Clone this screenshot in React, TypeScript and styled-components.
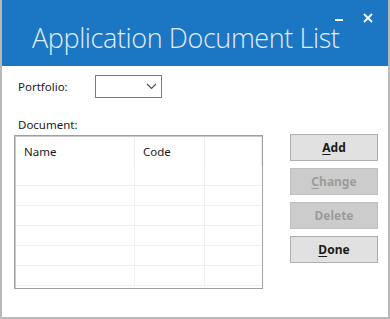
import { Fragment } from 'react';
import styled, { createGlobalStyle } from 'styled-components';

const GlobalStyle = createGlobalStyle`
  html, body {
    margin: 0;
    padding: 0;
    background: #ffffff;
  }
  body {
    font-family: "Noto Sans", "Liberation Sans", sans-serif;
  }
`;

const Window = styled.div`
  box-sizing: border-box;
  width: 390px;
  height: 319px;
  display: flex;
  flex-direction: column;
  background: #ffffff;
  border: 2px solid #b9b9b9;
  border-top: none;
  overflow: hidden;
`;

const TitleBar = styled.header`
  position: relative;
  height: 66px;
  margin: 0 -2px;
  background: #1b76c4;
  display: flex;
  align-items: flex-end;
  padding: 0 0 13px 32px;
  box-sizing: border-box;
`;

const Title = styled.h1`
  margin: 0;
  font-family: "Open Sans", "Noto Sans", sans-serif;
  font-weight: 300;
  font-size: 27px;
  line-height: 30px;
  color: #e3ecf7;
  letter-spacing: -0.4px;
`;

const WindowButton = styled.span<{ $right: number; $top: number }>`
  position: absolute;
  right: ${(p) => p.$right}px;
  top: ${(p) => p.$top}px;
  display: flex;
`;

const Body = styled.div`
  flex: 1;
  display: flex;
  flex-direction: column;
  padding: 9px 0 0 12px;
`;

const FieldRow = styled.div`
  display: flex;
  align-items: center;
  padding-left: 4px;
`;

const Label = styled.label`
  font-size: 11.5px;
  color: #1a1a1a;
  width: 77px;
`;

const Combo = styled.div`
  box-sizing: border-box;
  width: 67px;
  height: 23px;
  border: 1px solid #7a7a7a;
  background: #ffffff;
  display: flex;
  align-items: center;
  justify-content: flex-end;
  padding-right: 4px;
`;

const DocLabel = styled(Label)`
  display: block;
  margin: 19px 0 0 4px;
  line-height: 16px;
`;

const Main = styled.div`
  display: flex;
  align-items: flex-start;
  margin-top: 2px;
`;

const ListView = styled.div`
  box-sizing: border-box;
  width: 249px;
  height: 154px;
  border: 1px solid #a0a0a0;
  box-shadow: inset 1px 1px 0 #c8c8c8;
  background: #ffffff;
  padding: 1px 0 0 1px;
  overflow: hidden;
`;

const Grid = styled.div`
  display: grid;
  grid-template-columns: 119px 70px 1fr;
`;

const HeaderCell = styled.div`
  height: 29px;
  box-sizing: border-box;
  padding: 8px 0 0 8px;
  font-size: 11.5px;
  color: #1a1a1a;
  line-height: 14px;
  border-right: 1px solid #ececec;
  &:last-child {
    border-right: none;
  }
`;

const Cell = styled.div`
  height: 20px;
  box-sizing: border-box;
  border-bottom: 1px solid #efefef;
  border-right: 1px solid #f0f0f0;
  &:nth-child(3n) {
    border-right: none;
  }
`;

const Buttons = styled.div`
  display: flex;
  flex-direction: column;
  gap: 7px;
  margin: -1px 0 0 27px;
`;

const Button = styled.button<{ $disabled?: boolean }>`
  box-sizing: border-box;
  width: 88px;
  height: 27px;
  font-family: "Noto Sans", "Liberation Sans", sans-serif;
  font-weight: 700;
  font-size: 12px;
  padding: 0;
  border: 1px solid ${(p) => (p.$disabled ? '#bfbfbf' : '#adadad')};
  background: ${(p) => (p.$disabled ? '#cccccc' : '#e1e1e1')};
  color: ${(p) => (p.$disabled ? '#9c9c9c' : '#1a1a1a')};
  u {
    text-decoration-thickness: 1px;
    text-underline-offset: 2px;
  }
`;

const rows = Array.from({ length: 6 });

export default function App() {
  return (
    <>
      <GlobalStyle />
      <Window>
        <TitleBar>
          <Title>Application Document List</Title>
          <WindowButton $right={47} $top={18}>
            <svg width="8" height="4" viewBox="0 0 8 4">
              <rect x="0" y="1" width="8" height="2" fill="#ffffff" />
            </svg>
          </WindowButton>
          <WindowButton $right={17} $top={13}>
            <svg width="10" height="10" viewBox="0 0 10 10">
              <path d="M1 1 L9 9 M9 1 L1 9" stroke="#ffffff" strokeWidth="1.8" />
            </svg>
          </WindowButton>
        </TitleBar>
        <Body>
          <FieldRow>
            <Label>Portfolio:</Label>
            <Combo>
              <svg width="11" height="7" viewBox="0 0 11 7">
                <path d="M1 1 L5.5 5.5 L10 1" stroke="#505050" strokeWidth="1.2" fill="none" />
              </svg>
            </Combo>
          </FieldRow>
          <DocLabel>Document:</DocLabel>
          <Main>
            <ListView>
              <Grid>
                <HeaderCell>Name</HeaderCell>
                <HeaderCell>Code</HeaderCell>
                <HeaderCell />
                {rows.map((_, i) => (
                  <Fragment key={i}>
                    <Cell />
                    <Cell />
                    <Cell />
                  </Fragment>
                ))}
              </Grid>
            </ListView>
            <Buttons>
              <Button><u>A</u>dd</Button>
              <Button $disabled><u>C</u>hange</Button>
              <Button $disabled>Delete</Button>
              <Button><u>D</u>one</Button>
            </Buttons>
          </Main>
        </Body>
      </Window>
    </>
  );
}
